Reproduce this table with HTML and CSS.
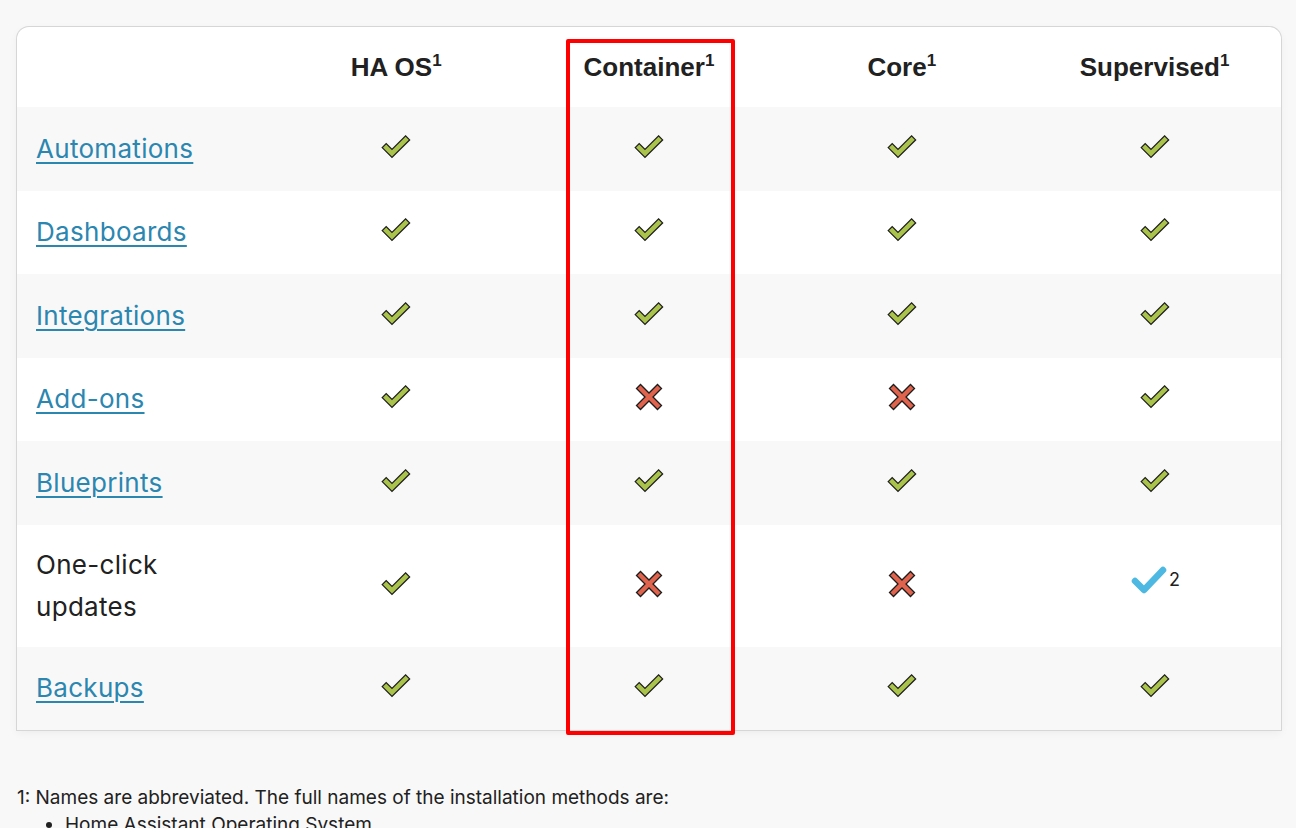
FILE: index.html
```html
<!DOCTYPE html>
<html lang="en">
<head>
<meta charset="utf-8">
<title>Installation methods</title>
<link rel="stylesheet" href="styles.css">
</head>
<body>
<svg width="0" height="0" class="defs" aria-hidden="true">
  <defs>
    <symbol id="yes" viewBox="0 0 30 24">
      <path d="M1.2 12.6 L5.2 8.6 L11 14.4 L24.6 0.9 L28.6 4.9 L11 22.4 Z" fill="#a9c34b" stroke="#1d1d1d" stroke-width="1.3" stroke-linejoin="miter"/>
    </symbol>
    <symbol id="no" viewBox="0 0 28 28">
      <path d="M1.5 5.5 L5.5 1.5 L14 10 L22.5 1.5 L26.5 5.5 L18 14 L26.5 22.5 L22.5 26.5 L14 18 L5.5 26.5 L1.5 22.5 L10 14 Z" fill="#e0634e" stroke="#1d1d1d" stroke-width="1.3" stroke-linejoin="miter"/>
    </symbol>
  </defs>
</svg>
<div class="wrap">
  <div class="card">
    <table class="grid">
      <thead>
        <tr>
          <th></th>
          <th>HA OS<sup>1</sup></th>
          <th>Container<sup>1</sup></th>
          <th>Core<sup>1</sup></th>
          <th>Supervised<sup>1</sup></th>
        </tr>
      </thead>
      <tbody>
        <tr class="alt">
          <td class="name"><a href="#">Automations</a></td>
          <td><svg class="ico"><use href="#yes"/></svg></td>
          <td><svg class="ico"><use href="#yes"/></svg></td>
          <td><svg class="ico"><use href="#yes"/></svg></td>
          <td><svg class="ico"><use href="#yes"/></svg></td>
        </tr>
        <tr>
          <td class="name"><a href="#">Dashboards</a></td>
          <td><svg class="ico"><use href="#yes"/></svg></td>
          <td><svg class="ico"><use href="#yes"/></svg></td>
          <td><svg class="ico"><use href="#yes"/></svg></td>
          <td><svg class="ico"><use href="#yes"/></svg></td>
        </tr>
        <tr class="alt">
          <td class="name"><a href="#">Integrations</a></td>
          <td><svg class="ico"><use href="#yes"/></svg></td>
          <td><svg class="ico"><use href="#yes"/></svg></td>
          <td><svg class="ico"><use href="#yes"/></svg></td>
          <td><svg class="ico"><use href="#yes"/></svg></td>
        </tr>
        <tr>
          <td class="name"><a href="#">Add-ons</a></td>
          <td><svg class="ico"><use href="#yes"/></svg></td>
          <td><svg class="ico x"><use href="#no"/></svg></td>
          <td><svg class="ico x"><use href="#no"/></svg></td>
          <td><svg class="ico"><use href="#yes"/></svg></td>
        </tr>
        <tr class="alt">
          <td class="name"><a href="#">Blueprints</a></td>
          <td><svg class="ico"><use href="#yes"/></svg></td>
          <td><svg class="ico"><use href="#yes"/></svg></td>
          <td><svg class="ico"><use href="#yes"/></svg></td>
          <td><svg class="ico"><use href="#yes"/></svg></td>
        </tr>
        <tr>
          <td class="name plain">One-click<br>updates</td>
          <td><svg class="ico"><use href="#yes"/></svg></td>
          <td><svg class="ico x"><use href="#no"/></svg></td>
          <td><svg class="ico x"><use href="#no"/></svg></td>
          <td><span class="blue"><svg class="bcheck" viewBox="0 0 36 30"><path d="M4 16 L13 25 L32 5" fill="none" stroke="#4db8e2" stroke-width="6.5" stroke-linecap="round" stroke-linejoin="round"/></svg><span class="note">2</span></span></td>
        </tr>
        <tr class="alt">
          <td class="name"><a href="#">Backups</a></td>
          <td><svg class="ico"><use href="#yes"/></svg></td>
          <td><svg class="ico"><use href="#yes"/></svg></td>
          <td><svg class="ico"><use href="#yes"/></svg></td>
          <td><svg class="ico"><use href="#yes"/></svg></td>
        </tr>
      </tbody>
    </table>
  </div>
  <div class="highlight"></div>
</div>
<div class="foot">
  <p>1: Names are abbreviated. The full names of the installation methods are:</p>
  <ul>
    <li>Home Assistant Operating System</li>
  </ul>
</div>
</body>
</html>
```
FILE: styles.css
```css
html, body {
  margin: 0;
  padding: 0;
  background: #f8f8f8;
  color: #212121;
  font-family: Inter, "Noto Sans", sans-serif;
  overflow: hidden;
}
.defs {
  position: absolute;
  width: 0;
  height: 0;
}
.wrap {
  position: relative;
  margin: 27px 15px 0 17px;
}
.card {
  background: #fff;
  border-radius: 12px 12px 0 0;
  overflow: hidden;
  box-shadow: 0 0 0 1px #d6d6d6, 0 3px 10px rgba(0, 0, 0, 0.05);
}
.grid {
  width: 100%;
  border-collapse: collapse;
  table-layout: fixed;
}
.grid thead tr {
  height: 80px;
}
.grid th {
  padding: 0;
  font-family: "Liberation Sans", Arial, sans-serif;
  font-weight: 700;
  font-size: 26px;
  line-height: 30px;
  color: #212121;
  text-align: center;
  vertical-align: middle;
}
.grid th sup {
  font-size: 17px;
  vertical-align: 10px;
  line-height: 0;
}
.grid tbody tr {
  height: 83.5px;
  background: #fff;
}
.grid tbody tr.alt {
  background: #f8f8f8;
}
.grid td {
  padding: 19px 19px;
  font-size: 26px;
  line-height: 42px;
  text-align: center;
  vertical-align: middle;
}
.grid td.name {
  text-align: left;
  letter-spacing: 0.3px;
}
.grid td a {
  color: #2b86b0;
  text-decoration: underline;
  text-decoration-thickness: 1.5px;
  text-underline-offset: 4px;
}
.grid td.plain {
  color: #212121;
}
.ico {
  display: block;
  width: 30px;
  height: 24px;
  margin: -4px auto 0;
}
.ico.x {
  width: 28px;
  height: 28px;
  margin-top: -4px;
}
.blue {
  display: inline-flex;
  align-items: flex-start;
  margin-left: 2px;
  margin-top: -4px;
}
.bcheck {
  width: 36px;
  height: 30px;
}
.note {
  font-size: 18px;
  line-height: 18px;
  margin-left: 2px;
  margin-top: 6px;
}
.highlight {
  position: absolute;
  left: 549px;
  top: 12px;
  width: 161px;
  height: 688px;
  border: 4px solid #ff0000;
  border-radius: 2px;
}
.foot {
  margin: 54px 0 0 17px;
  font-size: 19px;
  line-height: 27px;
  color: #212121;
}
.foot p {
  margin: 0;
}
.foot ul {
  margin: 0;
  padding-left: 48px;
}
```
